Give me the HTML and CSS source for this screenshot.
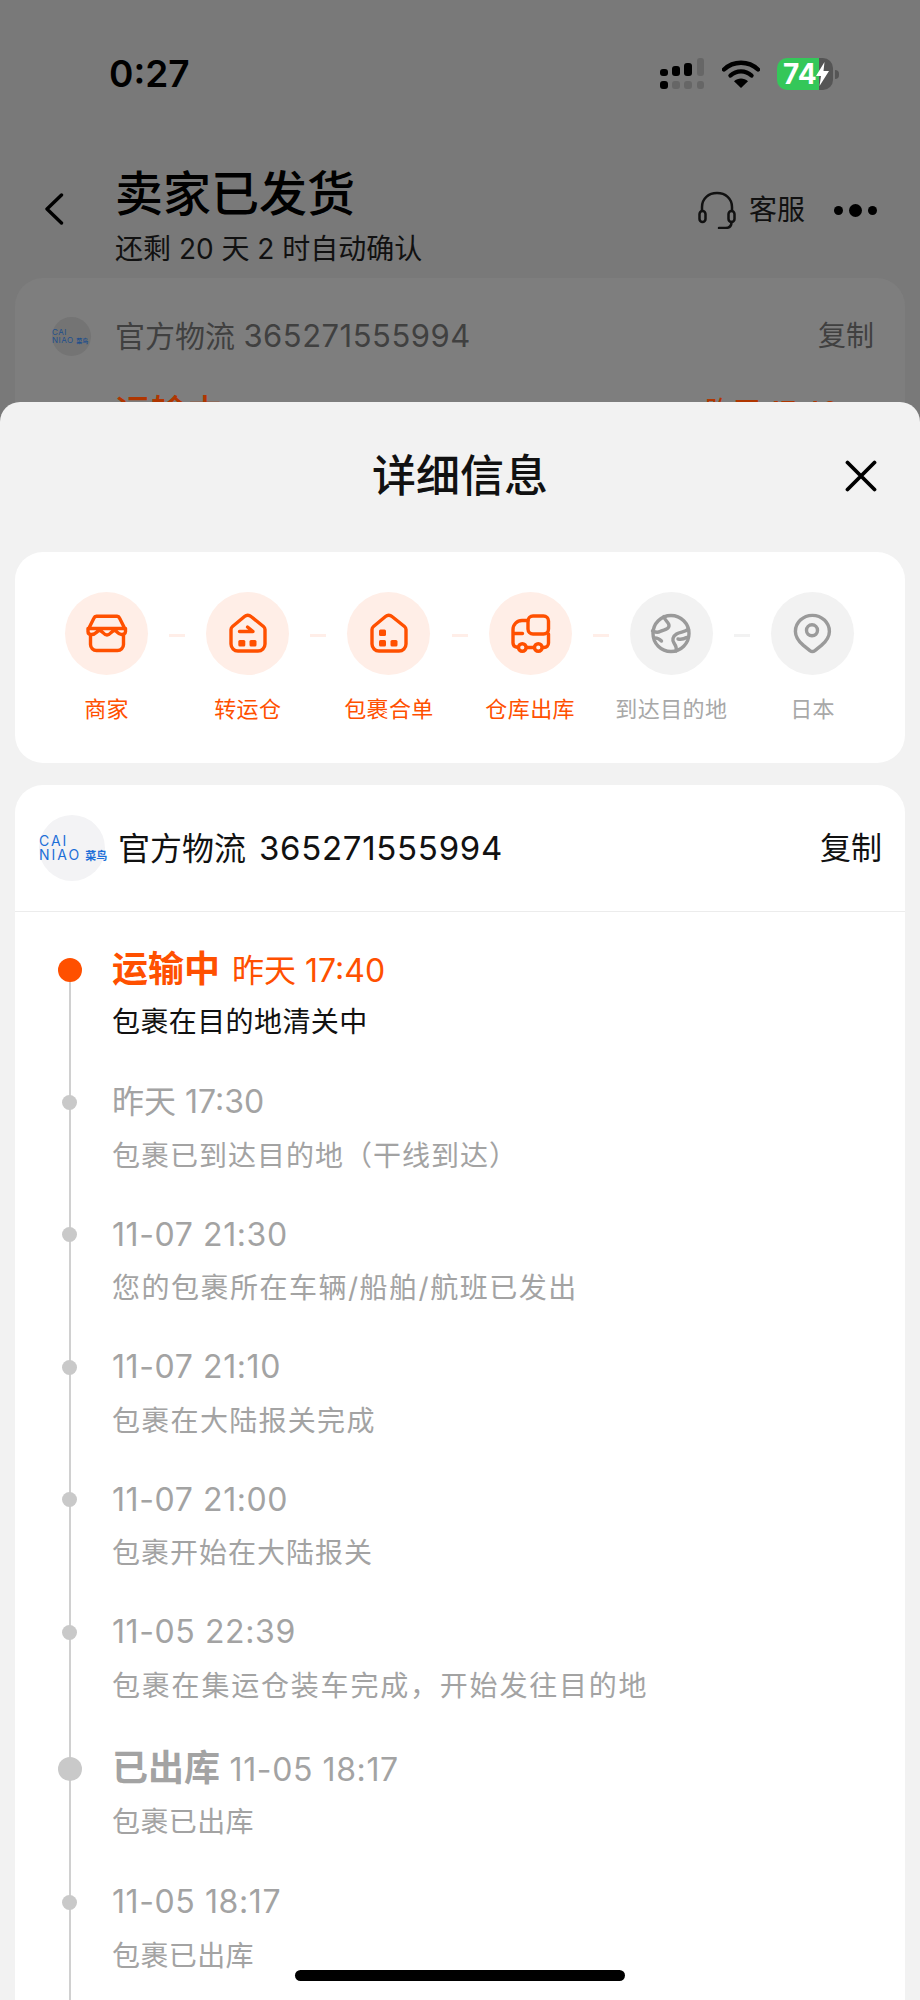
FILE: index.html
```html
<!DOCTYPE html>
<html lang="zh-CN">
<head>
<meta charset="utf-8">
<title>详细信息</title>
<link rel="stylesheet" href="styles.css">
</head>
<body>
<div class="screen">
  <div class="statusbar">
    <span class="clock">0:27</span>
    <div class="status-icons">
      <svg class="signal" viewBox="0 0 44 32" width="44" height="32">
        <rect x="0" y="11" width="8" height="7" rx="3" fill="#000"/>
        <rect x="12" y="8" width="8" height="10" rx="3" fill="#000"/>
        <rect x="24" y="5" width="8" height="13" rx="3" fill="#000"/>
        <rect x="37" y="0" width="7" height="18" rx="3" fill="#666"/>
        <rect x="0" y="23" width="8" height="8" rx="3" fill="#000"/>
        <rect x="12" y="23" width="8" height="8" rx="3" fill="#666"/>
        <rect x="24" y="23" width="8" height="8" rx="3" fill="#666"/>
        <rect x="37" y="23" width="7" height="8" rx="3" fill="#666"/>
      </svg>
      <svg class="wifi" viewBox="0 0 38 28" width="38" height="28">
        <path d="M2 9.500C11.500 .5 26.500 .5 36 9.500" fill="none" stroke="#000" stroke-width="4.400" stroke-linecap="round"/>
        <path d="M8.500 15.500C14.500 10 23.500 10 29.500 15.500" fill="none" stroke="#000" stroke-width="4.400" stroke-linecap="round"/>
        <path d="M12 21.300L19 28l7-6.700c-4-3.600-10-3.600-14 0z" fill="#000"/>
      </svg>
      <div class="battery">
        <span class="battery-num">74</span>
        <svg class="bolt" viewBox="0 0 13 24" width="13" height="24"><path d="M8.500 0L0 14h5l-1.500 10L13 9H7.500z" fill="#fff"/></svg>
      </div>
      <span class="battery-nub"></span>
    </div>
  </div>

  <header class="nav">
    <svg class="back" viewBox="0 0 20 32" width="20" height="32"><path d="M17.500 2L3 16l14.500 14" fill="none" stroke="#000" stroke-width="3.400" stroke-linecap="round" stroke-linejoin="round"/></svg>
    <div class="nav-text">
      <h1 class="nav-title">卖家已发货</h1>
      <p class="nav-sub">还剩 20 天 2 时自动确认</p>
    </div>
    <div class="nav-actions">
      <svg class="headset" viewBox="0 0 38 38" width="38" height="38">
        <path d="M4 20V16C4 7.500 10.500 2 19 2s15 5.500 15 14v4" fill="none" stroke="#111" stroke-width="2.500"/>
        <rect x="1.500" y="20" width="6" height="11" rx="3" fill="none" stroke="#111" stroke-width="2.500"/>
        <rect x="30.500" y="20" width="6" height="11" rx="3" fill="none" stroke="#111" stroke-width="2.500"/>
        <path d="M33.500 31c0 4-2.500 6-6 6H21" fill="none" stroke="#111" stroke-width="2.500" stroke-linecap="round"/>
      </svg>
      <span class="nav-service">客服</span>
      <div class="more"><i class="more-dot"></i><i class="more-dot more-dot-big"></i><i class="more-dot"></i></div>
    </div>
  </header>

  <section class="behind-card">
    <div class="behind-row">
      <div class="logo logo-small">
        <span class="logo-line">CAI</span>
        <span class="logo-line">NIAO <b class="logo-cn">菜鸟</b></span>
      </div>
      <span class="behind-no">官方物流 <span class="behind-digits">365271555994</span></span>
      <span class="behind-copy">复制</span>
    </div>
    <div class="behind-row behind-status">
      <span class="behind-state">运输中</span>
      <span class="behind-time">昨天 17:40</span>
    </div>
  </section>

  <section class="sheet">
    <div class="sheet-head">
      <h2 class="sheet-title">详细信息</h2>
      <svg class="close" viewBox="0 0 32 32" width="32" height="32"><path d="M2.500 2.500l27 27M29.500 2.500l-27 27" fill="none" stroke="#000" stroke-width="3.800" stroke-linecap="round"/></svg>
    </div>

    <div class="card steps">
      <div class="step step-on">
        <div class="step-circle">
          <svg viewBox="0 0 83 83" width="83" height="83" class="step-icon">
            <path d="M23 38L29 26a3 3 0 0 1 2.500-1.800H52a3 3 0 0 1 2.500 1.800L60.500 38M23 36.500H60.500M23 36.500v3c0 2 1.500 3 3.500 3 5 0 5.500-4 8-4 3 0 4 4.500 7.500 4.500s4.500-4.500 7.500-4.500c2.500 0 3 4 7 4 2 0 4-1 4-3v-3"/>
            <path d="M25.500 43v9.500a6 6 0 0 0 6 6h21a6 6 0 0 0 6-6V43"/>
          </svg>
        </div>
        <span class="step-label">商家</span>
      </div>
      <div class="step step-on">
        <div class="step-circle">
          <svg viewBox="0 0 83 83" width="83" height="83" class="step-icon">
            <path d="M25 37.500a4 4 0 0 1 1.500-3L38.500 24.500a5 5 0 0 1 6.500 0L57.500 34.500a4 4 0 0 1 1.500 3V52a7 7 0 0 1-7 7H32a7 7 0 0 1-7-7z"/>
            <path d="M33.500 39.500H47L41.500 35"/>
            <rect class="fill" x="32.300" y="48" width="7" height="6.500" rx="1.500"/>
            <rect class="fill" x="43.500" y="48" width="7" height="6.500" rx="1.500"/>
          </svg>
        </div>
        <span class="step-label">转运仓</span>
      </div>
      <div class="step step-on">
        <div class="step-circle">
          <svg viewBox="0 0 83 83" width="83" height="83" class="step-icon">
            <path d="M25 37.500a4 4 0 0 1 1.500-3L38.500 24.500a5 5 0 0 1 6.500 0L57.500 34.500a4 4 0 0 1 1.500 3V52a7 7 0 0 1-7 7H32a7 7 0 0 1-7-7z"/>
            <rect class="fill" x="32" y="37.500" width="7" height="6.500" rx="1.500"/>
            <rect class="fill" x="32" y="48" width="7" height="6.500" rx="1.500"/>
            <rect class="fill" x="43.500" y="48" width="7" height="6.500" rx="1.500"/>
          </svg>
        </div>
        <span class="step-label">包裹合单</span>
      </div>
      <div class="step step-on">
        <div class="step-circle">
          <svg viewBox="0 0 83 83" width="83" height="83" class="step-icon">
            <rect x="39" y="24" width="20.500" height="18" rx="5"/>
            <path d="M39 28.500H33c-5 0-9 4-9 9V51a4.500 4.500 0 0 0 4 4.300M24 41.500h9.500M37.500 55.500H45M53.500 55.500H55a4.500 4.500 0 0 0 4.500-4.500V42"/>
            <circle cx="33.300" cy="55.500" r="3.800"/>
            <circle cx="49.300" cy="55.500" r="3.800"/>
          </svg>
        </div>
        <span class="step-label">仓库出库</span>
      </div>
      <div class="step">
        <div class="step-circle">
          <svg viewBox="0 0 83 83" width="83" height="83" class="step-icon">
            <circle cx="41" cy="41.500" r="18"/>
            <path d="M34 24.500c0 4 5.500 5.500 5 9.500-.5 4-5.500 3.500-9 5.500-3 1.700-5 .5-7.500-.5"/>
            <path d="M58.500 37c-4 3.500-8 2.500-12 5-4 2.500-4.500 6-2.500 9 1.800 2.700 3 5 2 8M48 47c3 .5 6 0 8.500-1.500M24 46c3-.5 6 1.500 7.500 3"/>
          </svg>
        </div>
        <span class="step-label">到达目的地</span>
      </div>
      <div class="step">
        <div class="step-circle">
          <svg viewBox="0 0 83 83" width="83" height="83" class="step-icon">
            <path d="M41.400 23.400c9.400 0 17 7.200 17 16 0 6.500-4 10.500-8 14l-6.500 5.200a4 4 0 0 1-5 0l-6.500-5.200c-4-3.500-8-7.500-8-14 0-8.800 7.600-16 17-16z"/>
            <circle cx="41" cy="38.300" r="5.500"/>
          </svg>
        </div>
        <span class="step-label">日本</span>
      </div>
    </div>

    <div class="card track">
      <div class="track-head">
        <div class="logo">
          <span class="logo-line">CAI</span>
          <span class="logo-line">NIAO <b class="logo-cn">菜鸟</b></span>
        </div>
        <span class="track-no">官方物流 <span class="track-digits">365271555994</span></span>
        <span class="track-copy">复制</span>
      </div>
      <ol class="timeline">
        <li class="event event-now">
          <i class="dot"></i>
          <div class="event-title title-tight"><strong class="event-state">运输中</strong> <span class="event-when">昨天 17:40</span></div>
          <p class="event-desc">包裹在目的地清关中</p>
        </li>
        <li class="event">
          <i class="dot"></i>
          <div class="event-title title-tight">昨天 17:30</div>
          <p class="event-desc spread-10">包裹已到达目的地（干线到达）</p>
        </li>
        <li class="event">
          <i class="dot"></i>
          <div class="event-title">11-07 21:30</div>
          <p class="event-desc spread-15">您的包裹所在车辆/船舶/航班已发出</p>
        </li>
        <li class="event">
          <i class="dot"></i>
          <div class="event-title">11-07 21:10</div>
          <p class="event-desc spread-13">包裹在大陆报关完成</p>
        </li>
        <li class="event">
          <i class="dot"></i>
          <div class="event-title">11-07 21:00</div>
          <p class="event-desc spread-10">包裹开始在大陆报关</p>
        </li>
        <li class="event">
          <i class="dot"></i>
          <div class="event-title">11-05 22:39</div>
          <p class="event-desc spread-18">包裹在集运仓装车完成，开始发往目的地</p>
        </li>
        <li class="event event-major">
          <i class="dot"></i>
          <div class="event-title"><strong class="event-state">已出库</strong> 11-05 18:17</div>
          <p class="event-desc">包裹已出库</p>
        </li>
        <li class="event">
          <i class="dot"></i>
          <div class="event-title">11-05 18:17</div>
          <p class="event-desc">包裹已出库</p>
        </li>
      </ol>
    </div>
  </section>

  <div class="home-bar"></div>
</div>
</body>
</html>
```

FILE: styles.css
```css
* { box-sizing: border-box; }
html, body { margin: 0; padding: 0; }
body {
  width: 920px;
  height: 2000px;
  overflow: hidden;
  font-family: Inter, "Noto Sans CJK SC", sans-serif;
  color: #111;
}
h1, h2, p, ol { margin: 0; padding: 0; }
ol { list-style: none; }
i { display: block; font-style: normal; }

.screen {
  position: relative;
  width: 920px;
  height: 2000px;
  overflow: hidden;
  background: #797979;
  padding-top: 48px;
}

/* status bar */
.statusbar {
  display: flex;
  align-items: center;
  justify-content: space-between;
  height: 52px;
  padding: 0 81px 0 109px;
}
.clock { font-size: 37px; font-weight: 600; color: #000; line-height: 52px; }
.status-icons { display: flex; align-items: center; }
.signal { margin-right: 18px; }
.wifi { margin-right: 17px; }
.battery {
  position: relative;
  display: flex;
  align-items: center;
  width: 56px;
  height: 32px;
  padding-left: 6px;
  border-radius: 10px;
  background: linear-gradient(90deg, #34c759 0, #34c759 42px, #555 42px);
  color: #fff;
  font-size: 28px;
  font-weight: 700;
}
.battery-num { line-height: 32px; }
.bolt { position: absolute; right: 4px; top: 4px; }
.battery-nub {
  width: 4px;
  height: 9px;
  margin-left: 2px;
  border-radius: 0 4px 4px 0;
  background: #555;
}

/* nav behind sheet */
.nav {
  display: flex;
  align-items: center;
  height: 130px;
  margin-top: 50px;
  padding: 0 43px 0 44px;
}
.back { flex: none; margin: 0 51px 12px 0; }
.nav-text { flex: 1; }
.nav-title { font-size: 48px; font-weight: 500; line-height: 60px; color: #000; }
.nav-sub { margin-top: 7px; font-size: 28px; line-height: 36px; color: #111; }
.nav-actions { display: flex; align-items: center; margin-bottom: 10px; }
.nav-service { margin-left: 13px; font-size: 28px; line-height: 38px; color: #111; }
.more { display: flex; align-items: center; margin-left: 29px; gap: 6px; }
.more-dot { width: 9px; height: 9px; border-radius: 50%; background: #000; }
.more-dot-big { width: 13px; height: 13px; }

.behind-card {
  height: 300px;
  margin: -2px 15px 0;
  padding: 38px 31px 0 37px;
  border-radius: 28px;
  background: #7e7e7e;
}
.behind-row { display: flex; align-items: center; }
.behind-no { flex: 1; margin-left: 24px; font-size: 30px; color: #404040; line-height: 40px; }
.behind-digits { font-size: 31px; letter-spacing: .5px; }
.behind-copy { font-size: 28px; color: #404040; line-height: 40px; }
.behind-status { margin-top: 28px; justify-content: space-between; padding-left: 63px; padding-right: 35px; }
.behind-state { font-size: 36px; font-weight: 500; color: #b03600; }
.behind-time { font-size: 28px; color: #b03600; }

/* logo */
.logo {
  flex: none;
  display: flex;
  flex-direction: column;
  justify-content: center;
  width: 66px;
  height: 66px;
  border-radius: 50%;
  background: #f3f3f5;
  color: #1d6fd8;
  font-size: 14px;
  line-height: 14px;
  white-space: nowrap;
  letter-spacing: 2px;
}
.logo-line { display: block; }
.logo-cn { margin-left: -2px; font-size: 11px; font-weight: 700; letter-spacing: 0; }
.logo-small {
  width: 39px;
  height: 39px;
  background: #747474;
  color: #1f4f8c;
  font-size: 8px;
  line-height: 8px;
  letter-spacing: .5px;
}
.logo-small .logo-cn { margin-left: 0; font-size: 6px; }

/* sheet */
.sheet {
  position: absolute;
  top: 402px;
  left: 0;
  right: 0;
  bottom: 0;
  padding: 0 15px;
  background: #f2f2f2;
  border-radius: 20px 20px 0 0;
  overflow: hidden;
}
.sheet-head {
  display: grid;
  grid-template-columns: 1fr auto 1fr;
  align-items: center;
  height: 150px;
  padding-bottom: 2px;
}
.sheet-title {
  grid-column: 2;
  font-size: 44px;
  font-weight: 500;
  line-height: 60px;
  color: #111;
}
.close { justify-self: end; margin-right: 28px; }

.card { background: #fff; border-radius: 28px; }

/* progress steps */
.steps {
  display: grid;
  grid-template-columns: repeat(6, 141.2px);
  height: 211px;
  padding: 40px 0 0 21px;
}
.step {
  position: relative;
  display: flex;
  flex-direction: column;
  align-items: center;
}
.step::after {
  content: "";
  position: absolute;
  top: 42px;
  right: -8px;
  width: 16px;
  height: 3px;
  background: #ffeee8;
}
.step:last-child::after { display: none; }
.step:nth-child(n+5)::after { background: #f2f2f2; }
.step-circle {
  width: 83px;
  height: 83px;
  border-radius: 50%;
  background: #f2f2f2;
}
.step-on .step-circle { background: #ffeee7; }
.step-icon {
  display: block;
  fill: none;
  stroke: #9a9a9a;
  stroke-width: 3.4;
  stroke-linecap: round;
  stroke-linejoin: round;
}
.step-on .step-icon { stroke: #ff5000; }
.step-icon .fill { fill: #ff5000; stroke: none; }
.step-label {
  margin-top: 18px;
  font-size: 22px;
  line-height: 32px;
  letter-spacing: .4px;
  white-space: nowrap;
  color: #a8a8a8;
}
.step-on .step-label { color: #ff5000; }

/* tracking */
.track {
  margin-top: 22px;
  height: 1300px;
  overflow: hidden;
}
.track-head {
  display: flex;
  align-items: center;
  height: 127px;
  padding: 0 23px 0 24px;
  border-bottom: 1px solid #ececec;
}
.track-no { flex: 1; margin-left: 13px; font-size: 32px; line-height: 40px; color: #111; }
.track-digits { font-size: 33px; letter-spacing: .7px; margin-left: 4px; }
.track-copy { font-size: 31px; line-height: 40px; color: #111; }

.timeline {
  position: relative;
  padding: 34px 0 0 12px;
}
.timeline::before {
  content: "";
  position: absolute;
  top: 60px;
  bottom: 0;
  left: 53.5px;
  width: 2px;
  background: #d0d0d0;
}
.event {
  position: relative;
  display: grid;
  grid-template-columns: 85px 1fr;
  padding-bottom: 39px;
  color: #a3a3a3;
}
.dot {
  grid-row: 1;
  justify-self: center;
  align-self: center;
  width: 15px;
  height: 15px;
  border-radius: 50%;
  background: #c9c9c9;
}
.event-title { grid-column: 2; font-size: 32px; line-height: 40px; letter-spacing: .6px; }
.title-tight { letter-spacing: 0; }
.event-when { margin-left: 3px; }
.event-desc { grid-column: 2; margin-top: 13.5px; font-size: 28px; line-height: 40px; letter-spacing: .4px; }
.spread-10 { letter-spacing: 1px; }
.spread-13 { letter-spacing: 1.3px; }
.spread-15 { letter-spacing: 1.5px; }
.spread-18 { letter-spacing: 1.8px; }
.event-state { font-size: 36px; font-weight: 700; letter-spacing: 0; }
.event-now .event-title, .event-major .event-title { line-height: 46px; }
.event-now, .event-major { padding-bottom: 40.5px; }
.event-now .event-desc { margin-top: 7.5px; }
.event-major .event-desc { margin-top: 9px; }
.event-now .event-title { color: #ff5000; }
.event-now .event-desc { color: #111; }
.event-now .dot { width: 24px; height: 24px; background: #ff5000; }
.event-major .dot { width: 24px; height: 24px; }

.home-bar {
  position: absolute;
  left: 295px;
  top: 1970px;
  width: 330px;
  height: 11px;
  border-radius: 6px;
  background: #000;
}
```
